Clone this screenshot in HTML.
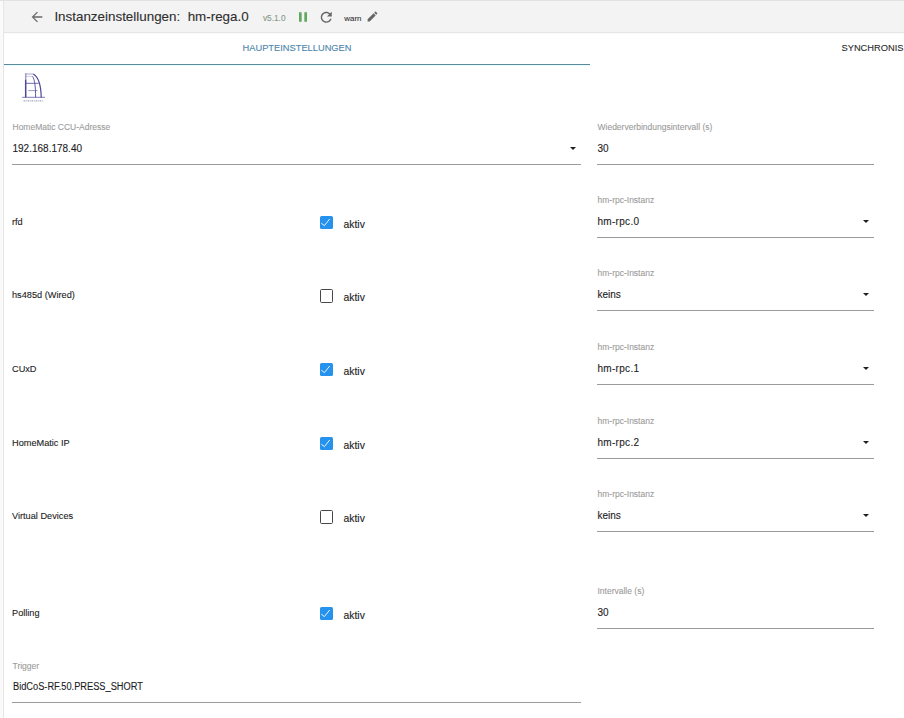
<!DOCTYPE html>
<html><head><meta charset="utf-8"><title>Instanzeinstellungen</title>
<style>
html,body{margin:0;padding:0;background:#fff;}
body{width:904px;height:718px;overflow:hidden;position:relative;font-family:"Liberation Sans",sans-serif;}
#lb{position:absolute;left:0;top:0;width:3px;height:718px;background:#fafafa}
#lbl{position:absolute;left:3px;top:0;width:1px;height:718px;background:#e6e6e6}
#hdr{position:absolute;left:4px;top:0;width:900px;height:32px;background:#f3f3f3}
#hdrtop{position:absolute;left:0;top:0;width:904px;height:1px;background:#e2e2e2}
#hdrbot{position:absolute;left:4px;top:32px;width:900px;height:1px;background:#e6e6e6}
#hdrsh{position:absolute;left:4px;top:33px;width:900px;height:1px;background:#fafafa}
.t{position:absolute;line-height:1;white-space:nowrap;-webkit-text-stroke:0.1px currentColor}
.ic{position:absolute;overflow:visible}
.ln{position:absolute}
.arr{position:absolute;width:0;height:0;border-left:3px solid transparent;border-right:3px solid transparent;border-top:3px solid #1f1f1f}
.cb{position:absolute;width:13px;height:13px;box-sizing:border-box;border-radius:1.6px}
.cb.on{background:#2592ee}
.cb.on svg{position:absolute;left:0;top:0}
.cb.off{border:1.4px solid #474747;background:#fff;height:13.7px}
</style></head><body>
<div id="lb"></div><div id="lbl"></div>
<div id="hdr"></div><div id="hdrtop"></div><div id="hdrbot"></div><div id="hdrsh"></div>
<svg class="ic" style="left:29.3px;top:9px;width:16px;height:16px" viewBox="0 0 24 24"><path fill="#6b6b6b" d="M20 11H7.83l5.59-5.59L12 4l-8 8 8 8 1.41-1.41L7.83 13H20v-2z"/></svg>
<div class="t" style="left:54.40px;top:10.16px;font-size:13.4px;color:#2e2e2e;">Instanzeinstellungen:&nbsp; hm-rega.0</div>
<div class="t" style="left:262.90px;top:14.17px;font-size:8.3px;color:#869886;">v5.1.0</div>
<svg class="ic" style="left:294.8px;top:8.8px;width:16px;height:16px" viewBox="0 0 24 24"><path fill="#5fa860" d="M6 19h4V5H6v14zm8-14v14h4V5h-4z"/></svg>
<svg class="ic" style="left:317.85px;top:8.95px;width:16.5px;height:16.5px" viewBox="0 0 24 24"><path fill="#666" d="M17.65 6.35C16.2 4.9 14.21 4 12 4c-4.42 0-7.99 3.58-7.99 8s3.57 8 7.99 8c3.73 0 6.84-2.55 7.73-6h-2.08c-.82 2.33-3.04 4-5.65 4-3.31 0-6-2.69-6-6s2.69-6 6-6c1.66 0 3.14.69 4.22 1.78L13 11h7V4l-2.35 2.35z"/></svg>
<div class="t" style="left:344.30px;top:15.11px;font-size:7.9px;color:#333;">warn</div>
<svg class="ic" style="left:366.1px;top:10.1px;width:13px;height:13px" viewBox="0 0 24 24"><path fill="#666" d="M3 17.25V21h3.75L17.81 9.94l-3.75-3.75L3 17.25zM20.71 7.04c.39-.39.39-1.02 0-1.41l-2.34-2.34c-.39-.39-1.02-.39-1.41 0l-1.83 1.83 3.75 3.75 1.83-1.83z"/></svg>
<div class="t" style="left:242.50px;top:43.93px;font-size:9.3px;color:#4b84ab;">HAUPTEINSTELLUNGEN</div>
<div class="t" style="left:841.50px;top:43.93px;font-size:9.3px;color:#2a2a2a;">SYNCHRONIS</div>
<div class="ln" style="left:4px;top:64px;width:586px;height:1px;background:#5a8a9c"></div><div class="ln" style="left:4px;top:65px;width:586px;height:1px;background:#e8fbff"></div>
<svg class="ic" style="left:20px;top:70px;width:28px;height:34px" viewBox="0 0 28 34">
<g fill="none" stroke="#4e4698">
<path d="M5.7 3.2V9.5" stroke-width="1.5" stroke-opacity="0.5"/><path d="M5.7 9.5V27.4" stroke-width="1.5"/>
<path d="M5.7 4.0H13.2" stroke-width="0.9" stroke-opacity="0.55"/>
<path d="M13.2 4.0C17.6 6.5 21 14 21.2 27.4" stroke-width="1.2"/>
<path d="M5.7 6.4H12.6" stroke-width="0.8" stroke-opacity="0.35"/>
<path d="M12.6 6.4C14.6 9.5 15.6 16 15.6 27.4" stroke-width="1.0" stroke-opacity="0.9"/>
<path d="M5.7 13.3H18.6" stroke-width="0.9" stroke-opacity="0.9"/>
<path d="M8.2 20.6H17.6" stroke-width="0.8" stroke-opacity="0.7"/>
<path d="M2.2 27.3H25" stroke-width="0.9" stroke-opacity="0.8"/>
<path d="M3.5 30.9H23" stroke-width="1.2" stroke-opacity="0.5" stroke="#555a80" stroke-dasharray="1.6 0.6 1 0.8"/>
</g></svg>
<div class="t" style="left:12.50px;top:123.30px;font-size:8.5px;color:#9b9b9b;">HomeMatic CCU-Adresse</div>
<div class="t" style="left:12.50px;top:143.73px;font-size:10.0px;color:#1b1b1b;">192.168.178.40</div>
<div class="ln" style="left:12.0px;top:164px;width:569px;height:1px;background:#9b9b9b"></div>
<div class="arr" style="left:569.5px;top:146.5px"></div>
<div class="t" style="left:597.50px;top:123.30px;font-size:8.5px;color:#9b9b9b;">Wiederverbindungsintervall (s)</div>
<div class="t" style="left:597.50px;top:143.73px;font-size:10.0px;color:#1b1b1b;">30</div>
<div class="ln" style="left:597.0px;top:164px;width:277px;height:1px;background:#9b9b9b"></div>
<div class="t" style="left:597.50px;top:196.30px;font-size:8.5px;color:#9b9b9b;">hm-rpc-Instanz</div>
<div class="t" style="left:597.50px;top:216.73px;font-size:10.0px;color:#1b1b1b;letter-spacing:0.3px;">hm-rpc.0</div>
<div class="ln" style="left:597.0px;top:237px;width:277px;height:1px;background:#9b9b9b"></div>
<div class="arr" style="left:862.5px;top:219.5px"></div>
<div class="t" style="left:597.50px;top:269.30px;font-size:8.5px;color:#9b9b9b;">hm-rpc-Instanz</div>
<div class="t" style="left:597.50px;top:289.74px;font-size:10.0px;color:#1b1b1b;">keins</div>
<div class="ln" style="left:597.0px;top:310px;width:277px;height:1px;background:#9b9b9b"></div>
<div class="arr" style="left:862.5px;top:292.5px"></div>
<div class="t" style="left:597.50px;top:343.30px;font-size:8.5px;color:#9b9b9b;">hm-rpc-Instanz</div>
<div class="t" style="left:597.50px;top:363.74px;font-size:10.0px;color:#1b1b1b;letter-spacing:0.3px;">hm-rpc.1</div>
<div class="ln" style="left:597.0px;top:384px;width:277px;height:1px;background:#9b9b9b"></div>
<div class="arr" style="left:862.5px;top:366.5px"></div>
<div class="t" style="left:597.50px;top:417.30px;font-size:8.5px;color:#9b9b9b;">hm-rpc-Instanz</div>
<div class="t" style="left:597.50px;top:437.74px;font-size:10.0px;color:#1b1b1b;letter-spacing:0.3px;">hm-rpc.2</div>
<div class="ln" style="left:597.0px;top:458px;width:277px;height:1px;background:#9b9b9b"></div>
<div class="arr" style="left:862.5px;top:440.5px"></div>
<div class="t" style="left:597.50px;top:490.30px;font-size:8.5px;color:#9b9b9b;">hm-rpc-Instanz</div>
<div class="t" style="left:597.50px;top:510.74px;font-size:10.0px;color:#1b1b1b;">keins</div>
<div class="ln" style="left:597.0px;top:531px;width:277px;height:1px;background:#9b9b9b"></div>
<div class="arr" style="left:862.5px;top:513.5px"></div>
<div class="t" style="left:597.50px;top:587.30px;font-size:8.5px;color:#9b9b9b;">Intervalle (s)</div>
<div class="t" style="left:597.50px;top:607.74px;font-size:10.0px;color:#1b1b1b;">30</div>
<div class="ln" style="left:597.0px;top:628px;width:277px;height:1px;background:#9b9b9b"></div>
<div class="t" style="left:12.00px;top:218.41px;font-size:9.2px;color:#1c1c1c;">rfd</div>
<div class="cb on" style="left:320px;top:216px"><svg viewBox="0 0 13 13" width="13" height="13"><path d="M1.3 7.2L4.4 9.6L9.7 3.0" fill="none" stroke="#fff" stroke-width="0.9"/></svg></div>
<div class="t" style="left:343.50px;top:219.90px;font-size:10.4px;color:#1a1a1a;">aktiv</div>
<div class="t" style="left:12.00px;top:291.41px;font-size:9.2px;color:#1c1c1c;">hs485d (Wired)</div>
<div class="cb off" style="left:320px;top:289px"></div>
<div class="t" style="left:343.50px;top:292.90px;font-size:10.4px;color:#1a1a1a;">aktiv</div>
<div class="t" style="left:12.00px;top:365.41px;font-size:9.2px;color:#1c1c1c;">CUxD</div>
<div class="cb on" style="left:320px;top:363px"><svg viewBox="0 0 13 13" width="13" height="13"><path d="M1.3 7.2L4.4 9.6L9.7 3.0" fill="none" stroke="#fff" stroke-width="0.9"/></svg></div>
<div class="t" style="left:343.50px;top:366.90px;font-size:10.4px;color:#1a1a1a;">aktiv</div>
<div class="t" style="left:12.00px;top:439.41px;font-size:9.2px;color:#1c1c1c;">HomeMatic IP</div>
<div class="cb on" style="left:320px;top:437px"><svg viewBox="0 0 13 13" width="13" height="13"><path d="M1.3 7.2L4.4 9.6L9.7 3.0" fill="none" stroke="#fff" stroke-width="0.9"/></svg></div>
<div class="t" style="left:343.50px;top:440.90px;font-size:10.4px;color:#1a1a1a;">aktiv</div>
<div class="t" style="left:12.00px;top:512.41px;font-size:9.2px;color:#1c1c1c;">Virtual Devices</div>
<div class="cb off" style="left:320px;top:510px"></div>
<div class="t" style="left:343.50px;top:513.90px;font-size:10.4px;color:#1a1a1a;">aktiv</div>
<div class="t" style="left:12.00px;top:609.41px;font-size:9.2px;color:#1c1c1c;">Polling</div>
<div class="cb on" style="left:320px;top:607px"><svg viewBox="0 0 13 13" width="13" height="13"><path d="M1.3 7.2L4.4 9.6L9.7 3.0" fill="none" stroke="#fff" stroke-width="0.9"/></svg></div>
<div class="t" style="left:343.50px;top:610.90px;font-size:10.4px;color:#1a1a1a;">aktiv</div>
<div class="t" style="left:12.50px;top:662.10px;font-size:8.5px;color:#9b9b9b;">Trigger</div>
<div class="t" style="left:12.50px;top:681.74px;font-size:10.0px;color:#1b1b1b;transform:scaleX(0.925);transform-origin:0 0;">BidCoS-RF.50.PRESS_SHORT</div>
<div class="ln" style="left:12.0px;top:702px;width:569px;height:1px;background:#9b9b9b"></div>
</body></html>
